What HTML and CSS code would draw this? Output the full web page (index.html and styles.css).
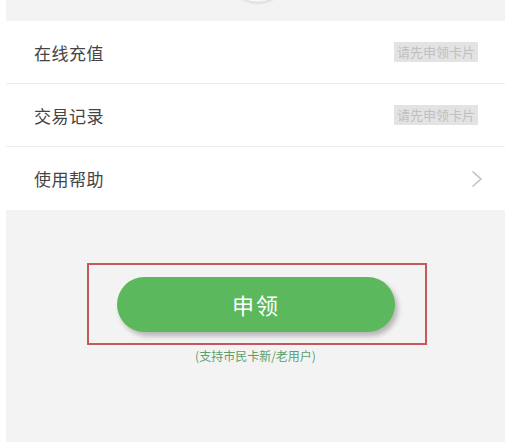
FILE: index.html
```html
<!DOCTYPE html>
<html lang="zh-CN">
<head>
  <meta charset="UTF-8">
  <meta name="viewport" content="width=device-width, initial-scale=1.0">
  <title>市民卡</title>
  <link rel="stylesheet" href="styles.css">
</head>
<body>
  <div class="page">
    <div class="top-band">
      <div class="avatar"></div>
    </div>

    <ul class="menu">
      <li class="menu-item">
        <span class="menu-label">在线充值</span>
        <span class="badge">请先申领卡片</span>
      </li>
      <li class="menu-item">
        <span class="menu-label">交易记录</span>
        <span class="badge">请先申领卡片</span>
      </li>
      <li class="menu-item">
        <span class="menu-label">使用帮助</span>
        <svg class="chevron" width="12" height="18" viewBox="0 0 12 18">
          <path d="M1.5 1.5 L10 9 L1.5 16.5" fill="none" stroke="#bdbdbd" stroke-width="1.4"/>
        </svg>
      </li>
    </ul>

    <div class="apply">
      <div class="highlight">
        <button class="btn-apply">申领</button>
      </div>
      <div class="apply-note">(支持市民卡新/老用户)</div>
    </div>
  </div>
</body>
</html>
```

FILE: styles.css
```css
body {
  margin: 0;
  background: #fff;
  font-family: "Noto Sans CJK SC", "Noto Sans", sans-serif;
}

.page {
  margin: 0 4px 0 6px;
  height: 442px;
  background-color: #f3f3f3;
  overflow: hidden;
}

.top-band {
  position: relative;
  height: 21px;
}

/* bottom of the avatar circle peeking in from above */
.avatar {
  position: absolute;
  left: 222px;
  top: -58px;
  width: 60px;
  height: 60px;
  border-radius: 50%;
  background-color: #f6f6f6;
  box-shadow: 0 1px 3px rgba(0,0,0,0.15);
}

.menu {
  list-style: none;
  margin: 0;
  padding: 0;
  background-color: #fff;
}

.menu-item {
  display: flex;
  align-items: center;
  justify-content: space-between;
  height: 62px;
  padding: 0 22px 0 28px;
  border-bottom: 1px solid #ededed;
}

.menu-item:last-child {
  border-bottom: none;
  height: 63px;
}

.menu-label {
  font-size: 17px;
  color: #444;
  letter-spacing: 0.5px;
}

.badge {
  margin-right: 5px;
  background-color: #e3e3e3;
  color: #c0c0c0;
  font-size: 13px;
  line-height: 20px;
  padding: 0 3px;
}

.apply {
  display: flex;
  flex-direction: column;
  align-items: center;
  padding-top: 53px;
}

.highlight {
  margin-left: 3px;
  width: 336px;
  height: 78px;
  border: 2px solid #c4585b;
  display: flex;
  align-items: center;
  justify-content: center;
}

.btn-apply {
  width: 278px;
  height: 55px;
  border: none;
  border-radius: 28px;
  background-color: #5cb85c;
  color: #fff;
  font-family: "Noto Sans CJK SC", sans-serif;
  font-size: 22px;
  letter-spacing: 2px;
  box-shadow: 3px 4px 5px rgba(0,0,0,0.25);
  margin-right: 2px;
}

.apply-note {
  margin-top: 2px;
  font-size: 12px;
  color: #5a9f6a;
}
```
